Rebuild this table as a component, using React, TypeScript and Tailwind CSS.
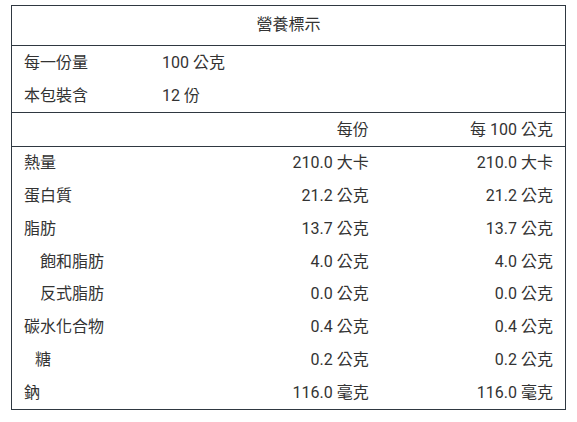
const rows = [
  { name: "熱量", indent: "", perServing: "210.0 大卡", per100: "210.0 大卡" },
  { name: "蛋白質", indent: "", perServing: "21.2 公克", per100: "21.2 公克" },
  { name: "脂肪", indent: "", perServing: "13.7 公克", per100: "13.7 公克" },
  { name: "飽和脂肪", indent: "pl-7", perServing: "4.0 公克", per100: "4.0 公克" },
  { name: "反式脂肪", indent: "pl-7", perServing: "0.0 公克", per100: "0.0 公克" },
  { name: "碳水化合物", indent: "", perServing: "0.4 公克", per100: "0.4 公克" },
  { name: "糖", indent: "pl-[23px]", perServing: "0.2 公克", per100: "0.2 公克" },
  { name: "鈉", indent: "", perServing: "116.0 毫克", per100: "116.0 毫克" },
]

export default function App() {
  return (
    <div
      className="min-h-screen bg-white px-[11px] pt-[5px] text-[16px] text-[#333]"
      style={{ fontFamily: 'Roboto, "Noto Sans CJK TC", sans-serif' }}
    >
      <div className="border border-[#2f3841]">
        {/* Title */}
        <div className="flex h-[40px] items-center justify-center border-b border-[#2f3841] pb-[1px]">
          營養標示
        </div>

        {/* Serving info */}
        <div className="border-b border-[#2f3841]">
          <div className="flex h-[33px] items-center">
            <div className="w-[150px] px-3">每一份量</div>
            <div>100 公克</div>
          </div>
          <div className="flex h-[33px] items-center">
            <div className="w-[150px] px-3">本包裝含</div>
            <div>12 份</div>
          </div>
        </div>

        {/* Column headers */}
        <div className="grid h-[34px] grid-cols-3 items-center border-b border-[#2f3841]">
          <div className="px-3"></div>
          <div className="px-3 text-right">每份</div>
          <div className="px-3 text-right">每 100 公克</div>
        </div>

        {/* Nutrients */}
        <div>
          {rows.map((row) => (
            <div key={row.name} className="grid h-[32.75px] grid-cols-3 items-center">
              <div className={row.indent || "px-3"}>{row.name}</div>
              <div className="px-3 text-right">{row.perServing}</div>
              <div className="px-3 text-right">{row.per100}</div>
            </div>
          ))}
        </div>
      </div>
    </div>
  )
}
